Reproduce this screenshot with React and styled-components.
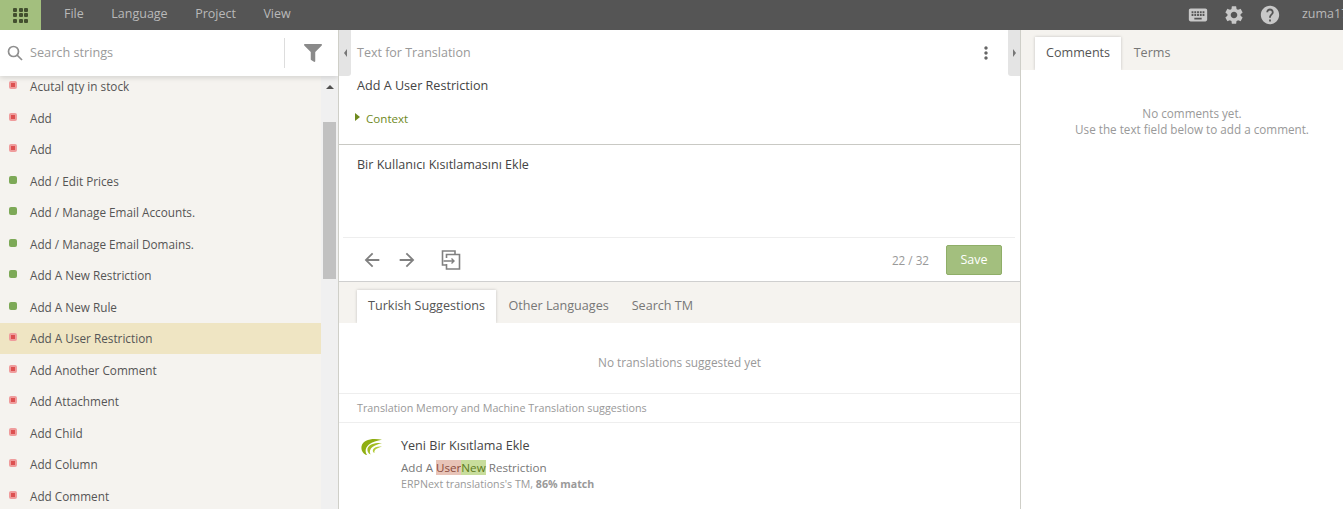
import React from "react";
import styled, { createGlobalStyle } from "styled-components";
import { MdKeyboard, MdSettings, MdHelp, MdArrowBack, MdArrowForward, MdMoreVert } from "react-icons/md";
import { FaFilter } from "react-icons/fa";

const GlobalStyle = createGlobalStyle`
  html, body { margin:0; padding:0; height:100%; overflow:hidden; background:#fff; }
  body { font-family:"Open Sans", sans-serif; font-size:13px; color:#555; }
  * { box-sizing:border-box; }
`;

const Page = styled.div`
  width:1343px;
  height:509px;
  display:flex;
  flex-direction:column;
  overflow:hidden;
`;

const TopBar = styled.div`
  height:30px;
  flex:none;
  background:#555;
  display:flex;
  align-items:center;
  color:#bdbdbd;
  overflow:hidden;
`;

const AppButton = styled.div`
  width:41px;
  height:30px;
  background:#a3bf7e;
  display:grid;
  grid-template-columns:repeat(3,4px);
  grid-auto-rows:4px;
  gap:1.5px;
  align-content:center;
  justify-content:center;
  span { background:#43502f; border-radius:1px; }
`;

const Menu = styled.div`
  display:flex;
  gap:27.5px;
  margin-left:23px;
  margin-top:-3px;
  flex:1;
`;

const MenuItem = styled.span`
  font-size:12.5px;
  color:#b9b9b9;
`;

const BarIcons = styled.div`
  display:flex;
  align-items:center;
  gap:14px;
  color:#c8c8c8;
  margin-right:21px;
  svg { display:block; }
`;

const User = styled.span`
  font-size:12.5px;
  color:#b9b9b9;
  width:41px;
  flex:none;
  margin-top:-3px;
  white-space:nowrap;
  overflow:hidden;
`;

const Main = styled.div`
  flex:1;
  display:flex;
  min-height:0;
`;

const LeftPane = styled.div`
  width:339px;
  flex:none;
  display:flex;
  flex-direction:column;
  position:relative;
  border-right:1px solid #cfcfc8;
  overflow:hidden;
`;

const SearchBar = styled.div`
  height:46px;
  flex:none;
  background:#fff;
  display:flex;
  align-items:center;
  padding-left:7px;
  position:relative;
  z-index:2;
  box-shadow:0 2px 5px rgba(0,0,0,.13);
`;

const SearchPlaceholder = styled.span`
  margin-left:7px;
  margin-top:-2px;
  width:254px;
  color:#9a9a9a;
  font-size:12.7px;
`;

const FilterBox = styled.div`
  border-left:1px solid #ddd;
  height:30px;
  width:54px;
  display:flex;
  align-items:center;
  justify-content:center;
  color:#8a8a8a;
  padding-left:2px;
`;

const ListWrap = styled.div`
  flex:1;
  display:flex;
  margin-top:-5.4px;
  min-height:0;
  background:#f5f3ef;
`;

const List = styled.div`
  width:321px;
  flex:none;
`;

const Row = styled.div`
  height:31.5px;
  display:flex;
  align-items:center;
  padding-left:9px;
  gap:13px;
  font-size:11.75px;
  color:#555;
  background:${p => (p.$active ? "#efe5c3" : "transparent")};
`;

const Status = styled.i`
  width:8px;
  height:8px;
  flex:none;
  border-radius:2px;
  position:relative;
  top:-1px;
  background:${p => (p.$done ? "#7da957" : "#ef9c9c")};
  &::after {
    content:"";
    display:${p => (p.$done ? "none" : "block")};
    width:4px;
    height:4px;
    margin:2px;
    background:#dc5050;
  }
`;

const ScrollTrack = styled.div`
  width:17px;
  flex:none;
  background:#f0f0f0;
  position:relative;
`;

const ScrollArrow = styled.div`
  position:absolute;
  left:5px;
  top:14px;
  border:4px solid transparent;
  border-top:0;
  border-bottom:4px solid #505050;
`;

const ScrollThumb = styled.div`
  position:absolute;
  left:2px;
  width:13px;
  top:51px;
  height:157px;
  background:#c1c1c1;
`;

const Collapse = styled.div`
  position:absolute;
  top:0;
  width:12px;
  height:46px;
  background:#e4e4e4;
  z-index:3;
  display:flex;
  align-items:center;
  justify-content:center;
  left:${p => (p.$side === "left" ? "0" : "auto")};
  right:${p => (p.$side === "right" ? "0" : "auto")};
  border-radius:${p => (p.$side === "left" ? "0 0 3px 0" : "0 0 0 3px")};
  &::after {
    content:"";
    border:4px solid transparent;
    ${p => (p.$side === "left"
      ? "border-left:0;border-right:3px solid #777;"
      : "border-right:0;border-left:3px solid #777;")}
  }
`;

const CenterPane = styled.div`
  width:682px;
  flex:none;
  position:relative;
  display:flex;
  flex-direction:column;
  border-right:1px solid #cfcfc8;
`;

const SourceHead = styled.div`
  height:46px;
  display:flex;
  align-items:center;
  justify-content:space-between;
  padding:0 24px 0 18px;
  color:#999;
  font-size:12.5px;
  span { margin-top:-2px; }
`;

const SourceText = styled.div`
  height:20px;
  line-height:20px;
  padding-left:18px;
  font-size:12.6px;
  color:#444;
`;

const ContextRow = styled.div`
  display:flex;
  align-items:center;
  gap:6px;
  padding-left:16px;
  height:20px;
  margin-top:12px;
  font-size:11.6px;
  color:#6f8a1e;
  &::before {
    content:"";
    border:4px solid transparent;
    border-right:0;
    border-left:5px solid #6f8a1e;
    margin-top:-2px;
  }
`;

const Target = styled.div`
  margin-top:16px;
  border-top:1px solid #c9c9c4;
  height:93px;
  padding:11px 18px;
  font-size:12.55px;
  line-height:17px;
  color:#444;
`;

const Toolbar = styled.div`
  margin-left:4px;
  margin-right:5px;
  border-top:1px solid #eee;
  height:44px;
  display:flex;
  align-items:center;
  padding:0 13px 0 18px;
  color:#808080;
`;

const ToolIcons = styled.div`
  display:flex;
  align-items:center;
  gap:13px;
  flex:1;
  svg { display:block; }
`;

const CopyIcon = styled.svg`
  margin-left:10px;
`;

const Count = styled.span`
  color:#999;
  font-size:11.7px;
  margin-right:17px;
`;

const SaveButton = styled.div`
  width:56px;
  height:30px;
  background:#a3bf7e;
  border:1px solid #8fae68;
  border-radius:2px;
  color:#fff;
  font-size:12.5px;
  display:flex;
  align-items:center;
  justify-content:center;
`;

const Tabs = styled.div`
  height:${p => p.$h}px;
  flex:none;
  background:#f5f3ef;
  display:flex;
  align-items:flex-end;
  padding-left:${p => p.$pad}px;
  border-top:${p => (p.$line ? "1px solid #cfcfcf" : "0")};
`;

const Tab = styled.div`
  height:33px;
  padding:0 ${p => p.$px}px 3px;
  display:flex;
  align-items:center;
  font-size:12.6px;
  color:${p => (p.$active ? "#555" : "#777")};
  background:${p => (p.$active ? "#fff" : "transparent")};
  box-shadow:${p => (p.$active ? "0 0 3px rgba(0,0,0,.2)" : "none")};
  clip-path:${p => (p.$active ? "inset(-4px -4px 0 -4px)" : "none")};
`;

const NoSuggest = styled.div`
  height:71px;
  padding-top:7px;
  display:flex;
  align-items:center;
  justify-content:center;
  font-size:11.8px;
  color:#999;
  border-bottom:1px solid #eee;
`;

const TmLabel = styled.div`
  height:29px;
  display:flex;
  align-items:center;
  padding-left:18px;
  font-size:10.75px;
  color:#999;
  border-bottom:1px solid #eee;
`;

const Suggestion = styled.div`
  display:flex;
  padding:13px 0 0 22px;
  gap:19px;
`;

const Logo = styled.svg`
  flex:none;
  margin-top:3px;
`;

const SuggestBody = styled.div`
  display:flex;
  flex-direction:column;
`;

const SuggestTitle = styled.div`
  font-size:12.6px;
  line-height:19px;
  color:#444;
`;

const SuggestSource = styled.div`
  font-size:11.65px;
  line-height:17px;
  margin-top:3.5px;
  color:#777;
`;

const Del = styled.span`
  background:#e8c4b8;
  color:#8a4a3c;
`;

const Ins = styled.span`
  background:#c8dd9c;
  color:#5c7a20;
`;

const SuggestMeta = styled.div`
  font-size:10.65px;
  line-height:17px;
  color:#999;
  b { font-weight:700; }
`;

const RightPane = styled.div`
  flex:1;
  display:flex;
  flex-direction:column;
`;

const EmptyNote = styled.div`
  margin-top:34.6px;
  padding-left:20px;
  text-align:center;
  font-size:11.7px;
  line-height:16px;
  color:#999;
`;

const rows = [
  ["Acutal qty in stock"],
  ["Add"],
  ["Add"],
  ["Add / Edit Prices", true],
  ["Add / Manage Email Accounts.", true],
  ["Add / Manage Email Domains.", true],
  ["Add A New Restriction", true],
  ["Add A New Rule", true],
  ["Add A User Restriction", false, true],
  ["Add Another Comment"],
  ["Add Attachment"],
  ["Add Child"],
  ["Add Column"],
  ["Add Comment"],
];

const App = () => {
  return (
    <Page>
      <GlobalStyle />
      <TopBar>
        <AppButton>
          {Array.from({ length: 9 }).map((_, i) => <span key={i} />)}
        </AppButton>
        <Menu>
          <MenuItem>File</MenuItem>
          <MenuItem>Language</MenuItem>
          <MenuItem>Project</MenuItem>
          <MenuItem>View</MenuItem>
        </Menu>
        <BarIcons>
          <MdKeyboard size={22} />
          <MdSettings size={22} />
          <MdHelp size={22} />
        </BarIcons>
        <User>zuma17</User>
      </TopBar>
      <Main>
        <LeftPane>
          <SearchBar>
            <svg width="16" height="16" viewBox="0 0 16 16" fill="none" stroke="#8f8f8f" strokeWidth="1.7">
              <circle cx="6.5" cy="6.5" r="5" />
              <path d="M10 10l5 5" />
            </svg>
            <SearchPlaceholder>Search strings</SearchPlaceholder>
            <FilterBox><FaFilter size={18} /></FilterBox>
          </SearchBar>
          <ListWrap>
            <List>
              {rows.map(([label, done, active], i) => (
                <Row key={i} $active={active}>
                  <Status $done={done} />
                  {label}
                </Row>
              ))}
            </List>
            <ScrollTrack>
              <ScrollArrow />
              <ScrollThumb />
            </ScrollTrack>
          </ListWrap>
        </LeftPane>
        <CenterPane>
          <Collapse $side="left" />
          <Collapse $side="right" />
          <SourceHead>
            <span>Text for Translation</span>
            <MdMoreVert size={20} color="#666" />
          </SourceHead>
          <SourceText>Add A User Restriction</SourceText>
          <ContextRow>Context</ContextRow>
          <Target>Bir Kullanıcı Kısıtlamasını Ekle</Target>
          <Toolbar>
            <ToolIcons>
              <MdArrowBack size={22} />
              <MdArrowForward size={22} />
              <CopyIcon width="20" height="20" viewBox="0 0 20 20" fill="none" stroke="#808080" strokeWidth="1.6">
                <path d="M5 15H1.5V1H14V4" />
                <path d="M5.5 8V4.5H18.5V19H5.5V14" />
                <path d="M2.5 11H13M10.5 8.5L13 11L10.5 13.5" strokeWidth="1.4" />
              </CopyIcon>
            </ToolIcons>
            <Count>22 / 32</Count>
            <SaveButton>Save</SaveButton>
          </Toolbar>
          <Tabs $h={42} $pad={18} $line>
            <Tab $active $px={11}>Turkish Suggestions</Tab>
            <Tab $px={12.5}>Other Languages</Tab>
            <Tab $px={10.5}>Search TM</Tab>
          </Tabs>
          <NoSuggest>No translations suggested yet</NoSuggest>
          <TmLabel>Translation Memory and Machine Translation suggestions</TmLabel>
          <Suggestion>
            <Logo width="21" height="16" viewBox="0 0 21 16">
              <path d="M21 0.8C12 -0.8 2 0 0.5 7.5 0 11.5 2 15 6 16 3.5 12.5 4.5 8.5 8 5.5 11.5 3 16 1.8 21 0.8z" fill="#8fae12" />
              <path d="M21 4C14 3.6 8 5 6.5 9.5 6 12 7 14.5 9.5 15.5 8 12.5 9 10 11.5 8 14 6 17.5 5 21 4z" fill="#a2bd22" />
              <path d="M21 7.5C17 7 13 8 12 10.5 11.5 12 12 13.5 13.5 14 13 12 14 10.5 16 9.5 17.5 8.7 19 8 21 7.5z" fill="#b4cc3c" />
            </Logo>
            <SuggestBody>
              <SuggestTitle>Yeni Bir Kısıtlama Ekle</SuggestTitle>
              <SuggestSource>Add A <Del>User</Del><Ins>New</Ins> Restriction</SuggestSource>
              <SuggestMeta>ERPNext translations's TM, <b>86% match</b></SuggestMeta>
            </SuggestBody>
          </Suggestion>
        </CenterPane>
        <RightPane>
          <Tabs $h={40} $pad={14}>
            <Tab $active $px={11}>Comments</Tab>
            <Tab $px={12.5}>Terms</Tab>
          </Tabs>
          <EmptyNote>
            No comments yet.<br />
            Use the text field below to add a comment.
          </EmptyNote>
        </RightPane>
      </Main>
    </Page>
  );
};

export default App;
